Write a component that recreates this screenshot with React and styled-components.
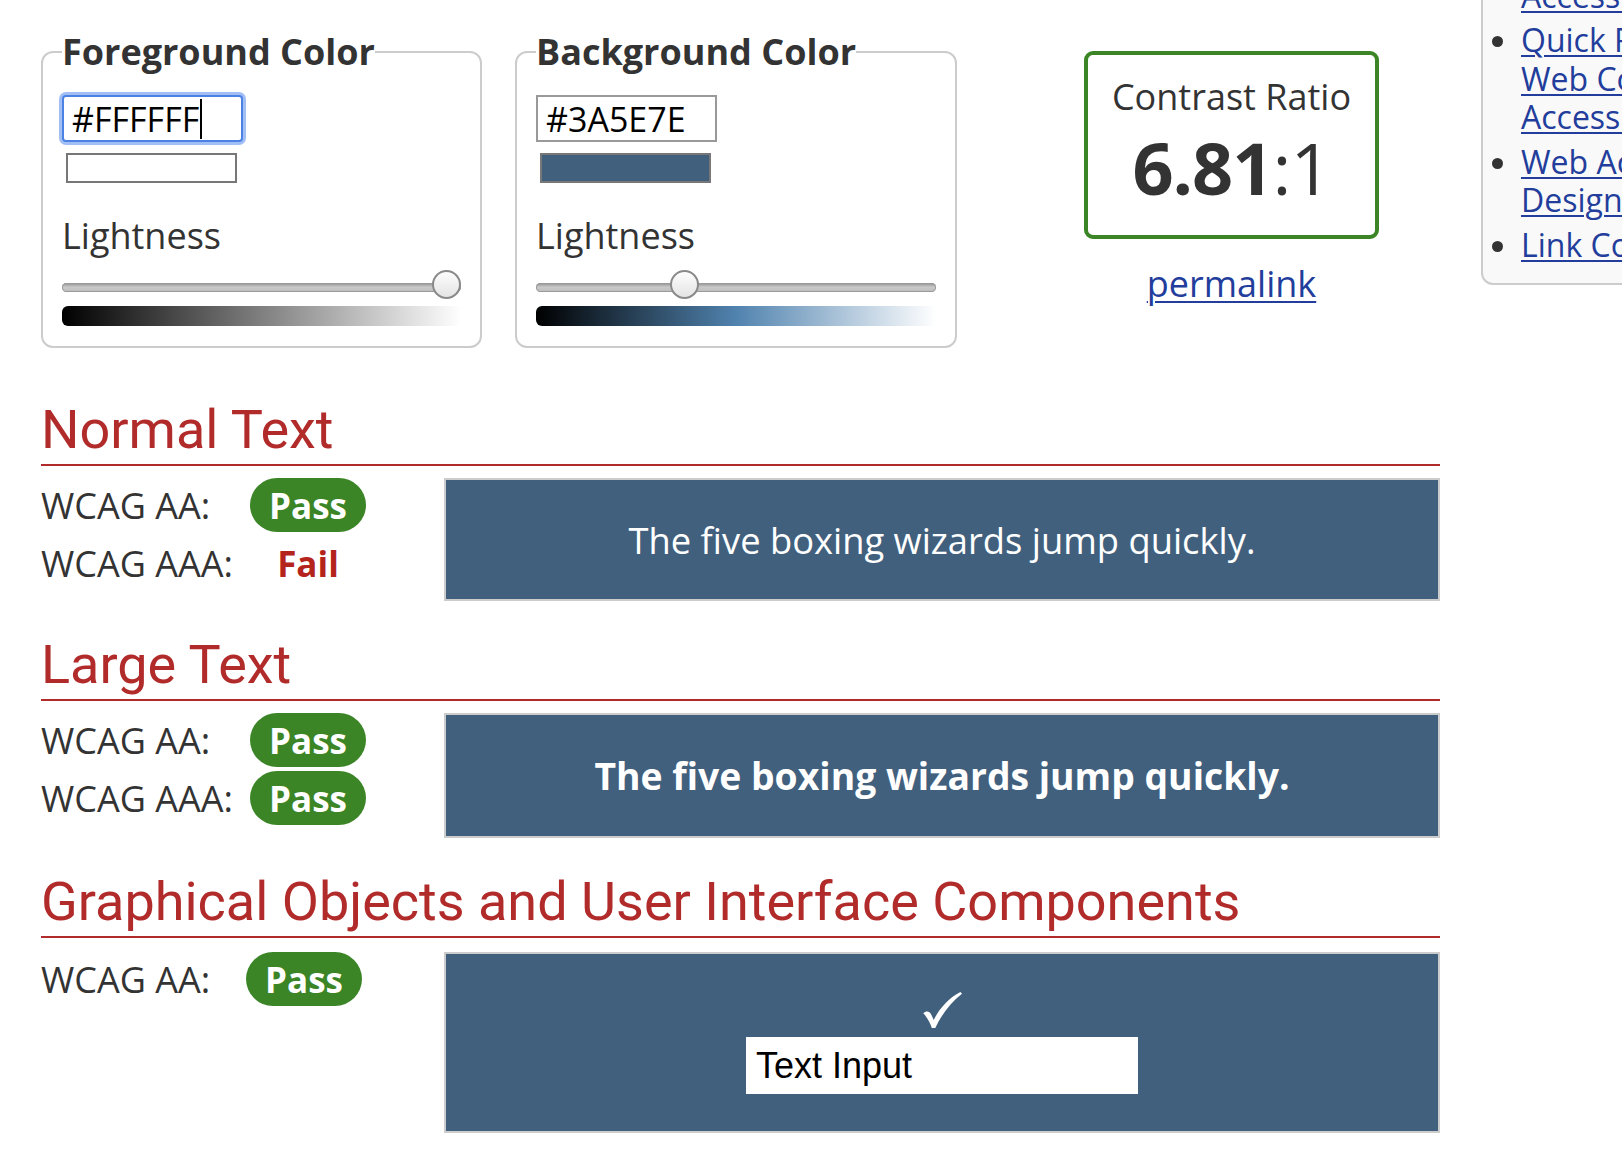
import React from "react";
import styled, { createGlobalStyle } from "styled-components";

const GlobalStyle = createGlobalStyle`
  html, body {
    margin: 0;
    padding: 0;
    overflow: hidden;
    background: #fff;
  }
  body {
    font-family: "Open Sans", "DejaVu Sans", sans-serif;
    color: #333;
  }
`;

const resources = [
  ["Contrast and Color", "Accessibility"],
  ["Quick Reference:", "Web Content", "Accessibility"],
  ["Web Accessibility for", "Designers"],
  ["Link Contrast Checker"],
];

function ColorPicker(props) {
  return (
    <Fieldset $width={props.width}>
      <Legend>{props.title}</Legend>
      <InputWrap>
        <HexInput
          $focused={props.focused}
          defaultValue={props.hex}
          spellCheck={false}
        />
        {props.focused && (
          <CaretLayer>
            <Ghost>{props.hex}</Ghost>
            <Caret />
          </CaretLayer>
        )}
      </InputWrap>
      <Swatch $color={props.swatch} />
      <FieldLabel>Lightness</FieldLabel>
      <Range type="range" min="0" max="100" defaultValue={props.lightness} />
      <LightnessBar $gradient={props.gradient} />
    </Fieldset>
  );
}

function ResultRow(props) {
  return (
    <Row $labelWidth={props.labelWidth}>
      <RowLabel>{props.label}</RowLabel>
      <RowResult>
        {props.pass ? <Pill>Pass</Pill> : <Fail>Fail</Fail>}
      </RowResult>
    </Row>
  );
}

function CheckMark() {
  return (
    <CheckIcon viewBox="0 0 39 36" aria-hidden="true">
      <path
        d="M0.3 21.3 C3 18.4 6.6 18.8 8.2 22.4 L10.7 28 C16.5 16.2 26 5.8 37.4 0 L39 1.8 C28.4 10.2 19 21.4 12.3 36 L8.8 36 C6.8 30 4 25.3 0.3 21.3 Z"
        fill="#fff"
      />
    </CheckIcon>
  );
}

export default function App() {
  return (
    <Page>
      <GlobalStyle />
      <Main>
        <TopRow>
          <ColorPicker
            title="Foreground Color"
            hex="#FFFFFF"
            swatch="#FFFFFF"
            focused
            width={441}
            lightness={100}
            gradient="linear-gradient(to right, #000, #fff)"
          />
          <ColorPicker
            title="Background Color"
            hex="#3A5E7E"
            swatch="#41607e"
            width={442}
            lightness={36}
            gradient="linear-gradient(to right, #000, hsl(208, 37%, 50%), #fff)"
          />
          <ContrastColumn>
            <ContrastBox>
              <RatioLabel>Contrast Ratio</RatioLabel>
              <RatioValue>
                <strong>6.81</strong>:1
              </RatioValue>
            </ContrastBox>
            <Permalink href="#">permalink</Permalink>
          </ContrastColumn>
        </TopRow>

        <Sections>
          <Section>
            <SectionTitle>Normal Text</SectionTitle>
            <SectionBody>
              <Results>
                <ResultRow label="WCAG AA:" pass />
                <ResultRow label="WCAG AAA:" />
              </Results>
              <Sample $height={123}>The five boxing wizards jump quickly.</Sample>
            </SectionBody>
          </Section>

          <Section>
            <SectionTitle>Large Text</SectionTitle>
            <SectionBody>
              <Results>
                <ResultRow label="WCAG AA:" pass />
                <ResultRow label="WCAG AAA:" pass />
              </Results>
              <Sample $height={125} $bold>
                The five boxing wizards jump quickly.
              </Sample>
            </SectionBody>
          </Section>

          <Section>
            <SectionTitle>Graphical Objects and User Interface Components</SectionTitle>
            <SectionBody $gap={14}>
              <Results>
                <ResultRow label="WCAG AA:" labelWidth={205} pass />
              </Results>
              <GraphicSample>
                <CheckMark />
                <SampleInput defaultValue="Text Input" />
              </GraphicSample>
            </SectionBody>
          </Section>
        </Sections>
      </Main>

      <Sidebar>
        <ResourceList>
          {resources.map((lines) => (
            <li key={lines.join(" ")}>
              <a href="#">
                {lines.map((line, i) => (
                  <React.Fragment key={line}>
                    {i > 0 && <br />}
                    {line}
                  </React.Fragment>
                ))}
              </a>
            </li>
          ))}
        </ResourceList>
      </Sidebar>
    </Page>
  );
}

const Page = styled.div`
  display: flex;
  align-items: flex-start;
`;

const Main = styled.main`
  flex-shrink: 0;
  box-sizing: border-box;
  width: 1440px;
  padding: 34px 0 0 41px;
`;

const TopRow = styled.div`
  display: flex;
  align-items: flex-start;
  gap: 33px;
`;

const Fieldset = styled.fieldset`
  box-sizing: border-box;
  width: ${(p) => p.$width}px;
  margin: 0;
  padding: 25px 19px 20px;
  border: 2px solid #ccc;
  border-radius: 12px;
`;

const Legend = styled.legend`
  padding: 0;
  font-size: 36px;
  line-height: 36px;
  font-weight: 700;
  color: #333;
`;

const InputWrap = styled.div`
  position: relative;
  width: 181px;
`;

const HexInput = styled.input`
  display: block;
  box-sizing: border-box;
  width: 181px;
  height: 47px;
  margin: 0;
  padding: 0 8px;
  border: 2px solid ${(p) => (p.$focused ? "#4c82e4" : "#999")};
  border-radius: ${(p) => (p.$focused ? "4px" : "0")};
  box-shadow: ${(p) =>
    p.$focused ? "0 0 0 3px rgba(110, 155, 240, 0.65)" : "none"};
  outline: none;
  font-family: "Open Sans", sans-serif;
  font-size: 34px;
  color: #000;
  background: #fff;
`;

const CaretLayer = styled.div`
  position: absolute;
  left: 10px;
  top: 0;
  bottom: 0;
  display: flex;
  align-items: center;
  pointer-events: none;
  font-family: "Open Sans", sans-serif;
  font-size: 34px;
`;

const Ghost = styled.span`
  color: transparent;
  white-space: pre;
`;

const Caret = styled.span`
  width: 2px;
  height: 40px;
  margin-left: 1px;
  background: #000;
`;

const Swatch = styled.div`
  box-sizing: border-box;
  width: 171px;
  height: 30px;
  margin: 11px 0 0 4px;
  border: 2px solid #777;
  background: ${(p) => p.$color};
`;

const FieldLabel = styled.div`
  margin-top: 30px;
  font-size: 36px;
  line-height: 45px;
  color: #333;
`;

const Range = styled.input`
  -webkit-appearance: none;
  appearance: none;
  display: block;
  width: 100%;
  height: 34px;
  margin: 12px 0 0;
  background: transparent;

  &::-webkit-slider-runnable-track {
    height: 9px;
    border-radius: 5px;
    background: linear-gradient(#8e8e8e, #c9c9c9 45%, #bdbdbd);
    box-shadow: inset 0 0 0 1px #9a9a9a;
  }

  &::-webkit-slider-thumb {
    -webkit-appearance: none;
    box-sizing: border-box;
    width: 29px;
    height: 29px;
    margin-top: -13px;
    border-radius: 50%;
    border: 2px solid #8a8a8a;
    background: linear-gradient(#fdfdfd, #e4e4e4);
  }
`;

const LightnessBar = styled.div`
  height: 20px;
  margin-top: 2px;
  border-radius: 6px 0 0 6px;
  background: ${(p) => p.$gradient};
`;

const ContrastColumn = styled.div`
  display: flex;
  flex-direction: column;
  align-items: center;
  width: 295px;
  margin: 17px 0 0 94px;
`;

const ContrastBox = styled.div`
  box-sizing: border-box;
  width: 295px;
  height: 188px;
  padding-top: 17px;
  border: 4px solid #3b8527;
  border-radius: 9px;
  text-align: center;
`;

const RatioLabel = styled.div`
  font-size: 36px;
  line-height: 49px;
  color: #333;
`;

const RatioValue = styled.div`
  margin-top: 9px;
  font-size: 72px;
  line-height: 74px;
  letter-spacing: -1px;
  color: #333;

  strong {
    font-weight: 700;
  }
`;

const Permalink = styled.a`
  margin-top: 20px;
  font-size: 36px;
  line-height: 49px;
  color: #223d9b;
  text-decoration: underline;
  text-decoration-thickness: 2px;
  text-underline-offset: 4px;
`;

const Sections = styled.div`
  display: flex;
  flex-direction: column;
  gap: 31px;
  margin-top: 49px;
`;

const Section = styled.section``;

const SectionTitle = styled.h2`
  margin: 0;
  padding-bottom: 2px;
  border-bottom: 2px solid #b22b2b;
  font-family: Roboto, "Liberation Sans", sans-serif;
  font-size: 54px;
  line-height: 65px;
  font-weight: 400;
  color: #b22b2b;
`;

const SectionBody = styled.div`
  display: grid;
  grid-template-columns: 403px 1fr;
  align-items: start;
  margin-top: ${(p) => p.$gap || 12}px;
`;

const Results = styled.div`
  display: flex;
  flex-direction: column;
  gap: 4px;
`;

const Row = styled.div`
  display: grid;
  grid-template-columns: ${(p) => p.$labelWidth || 209}px 116px;
  align-items: center;
  height: 54px;
`;

const RowLabel = styled.span`
  font-size: 36px;
  color: #333;
  white-space: nowrap;
`;

const RowResult = styled.div`
  display: flex;
  justify-content: center;
`;

const Pill = styled.span`
  display: inline-flex;
  align-items: center;
  justify-content: center;
  width: 116px;
  height: 54px;
  border-radius: 27px;
  background: #3b8527;
  color: #fff;
  font-size: 35px;
  font-weight: 700;
`;

const Fail = styled.span`
  color: #b4241d;
  font-size: 35px;
  font-weight: 700;
`;

const Sample = styled.div`
  box-sizing: border-box;
  display: flex;
  align-items: center;
  justify-content: center;
  height: ${(p) => p.$height}px;
  border: 2px solid #ccc;
  background: #41607e;
  color: #fff;
  font-size: ${(p) => (p.$bold ? 37.3 : 36.3)}px;
  font-weight: ${(p) => (p.$bold ? 700 : 400)};
`;

const GraphicSample = styled.div`
  box-sizing: border-box;
  display: flex;
  flex-direction: column;
  align-items: center;
  gap: 9px;
  height: 181px;
  padding: 38px 0 34px;
  border: 2px solid #ccc;
  background: #41607e;
`;

const CheckIcon = styled.svg`
  display: block;
  width: 39px;
  height: 36px;
`;

const SampleInput = styled.input`
  box-sizing: border-box;
  width: 392px;
  height: 57px;
  margin: 0;
  padding: 0 8px;
  border: 2px solid #fff;
  outline: none;
  background: #fff;
  color: #000;
  font-family: "Liberation Sans", Arial, sans-serif;
  font-size: 36px;
`;

const Sidebar = styled.aside`
  flex-shrink: 0;
  box-sizing: border-box;
  width: 340px;
  margin: -64px 0 0 41px;
  padding-bottom: 19px;
  border: 2px solid #ccc;
  border-radius: 0 0 0 12px;
  background: #f9f9f9;
`;

const ResourceList = styled.ul`
  margin: 0;
  padding: 0 0 0 38px;

  li {
    font-size: 32px;
    line-height: 38.5px;
    margin-bottom: 6px;
    white-space: nowrap;
  }

  li:last-child {
    margin-bottom: 0;
  }

  a {
    color: #223d9b;
    text-decoration: underline;
    text-decoration-thickness: 2px;
    text-underline-offset: 3px;
  }
`;
